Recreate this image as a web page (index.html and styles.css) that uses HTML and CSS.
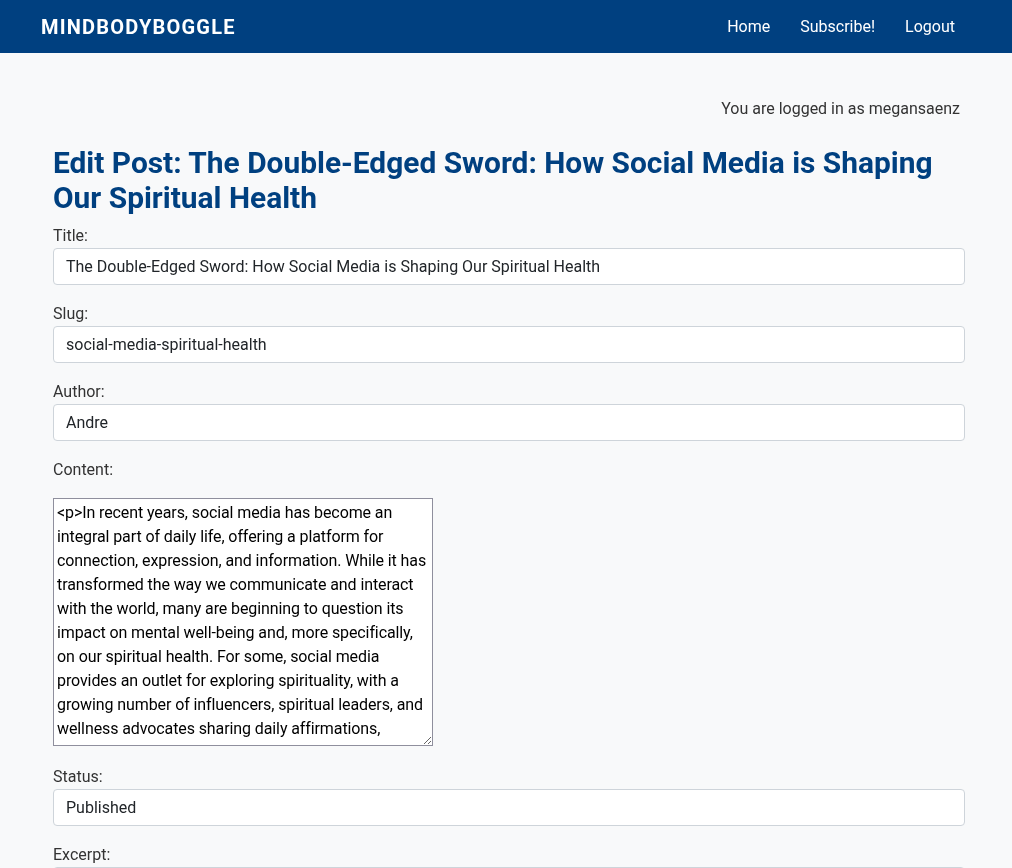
FILE: index.html
```html
<!DOCTYPE html>
<html lang="en">
<head>
<meta charset="utf-8">
<title>Edit Post - MindBodyBoggle</title>
<link rel="stylesheet" href="styles.css">
</head>
<body>
<nav class="navbar">
  <a class="brand" href="#">MINDBODYBOGGLE</a>
  <ul class="nav-links">
    <li><a href="#">Home</a></li>
    <li><a href="#">Subscribe!</a></li>
    <li><a href="#">Logout</a></li>
  </ul>
</nav>
<main class="container">
  <p class="user-line">You are logged in as megansaenz</p>
  <h1 class="page-title">Edit Post: The Double-Edged Sword: How Social Media is Shaping Our Spiritual Health</h1>
  <form class="post-form">
    <div class="form-group">
      <label class="field-label" for="title">Title:</label>
      <input class="field-input" id="title" type="text" value="The Double-Edged Sword: How Social Media is Shaping Our Spiritual Health">
    </div>
    <div class="form-group">
      <label class="field-label" for="slug">Slug:</label>
      <input class="field-input" id="slug" type="text" value="social-media-spiritual-health">
    </div>
    <div class="form-group">
      <label class="field-label" for="author">Author:</label>
      <input class="field-input" id="author" type="text" value="Andre">
    </div>
    <div class="form-group">
      <label class="field-label" for="content">Content:</label>
      <textarea class="field-textarea" id="content">&lt;p&gt;In recent years, social media has become an integral part of daily life, offering a platform for connection, expression, and information. While it has transformed the way we communicate and interact with the world, many are beginning to question its impact on mental well-being and, more specifically, on our spiritual health. For some, social media provides an outlet for exploring spirituality, with a growing number of influencers, spiritual leaders, and wellness advocates sharing daily affirmations, meditations, and teachings with millions of followers.&lt;/p&gt;</textarea>
    </div>
    <div class="form-group">
      <label class="field-label" for="status">Status:</label>
      <input class="field-input" id="status" type="text" value="Published">
    </div>
    <div class="form-group">
      <label class="field-label" for="excerpt">Excerpt:</label>
      <input class="field-input" id="excerpt" type="text" value="Exploring how social media shapes our spiritual well-being.">
    </div>
  </form>
</main>
</body>
</html>
```
FILE: styles.css
```css
* {
  box-sizing: border-box;
}

html, body {
  margin: 0;
  padding: 0;
}

body {
  background: #f8f9fa;
  font-family: Roboto, "Liberation Sans", Arial, sans-serif;
  font-size: 16px;
  color: #333333;
}

.navbar {
  display: flex;
  align-items: center;
  justify-content: space-between;
  height: 53px;
  padding: 0 42px 0 41px;
  background: #004080;
}

.brand {
  color: #ffffff;
  text-decoration: none;
  font-weight: 700;
  font-size: 20px;
  letter-spacing: 1.2px;
}

.nav-links {
  display: flex;
  list-style: none;
  margin: 0;
  padding: 0;
}

.nav-links a {
  display: block;
  padding: 0 15px;
  color: #ffffff;
  text-decoration: none;
  font-size: 16px;
  line-height: 54px;
}

.container {
  padding: 44px 47px 40px 53px;
}

.user-line {
  margin: 0 5px 24px 0;
  text-align: right;
  line-height: 24px;
  color: #333333;
}

.page-title {
  margin: 0 0 9px;
  font-size: 29.9px;
  line-height: 35px;
  font-weight: 700;
  color: #004080;
}

.form-group {
  margin-bottom: 17px;
}

.field-label {
  display: block;
  line-height: 24px;
  font-size: 16px;
  color: #333333;
}

.field-input {
  display: block;
  width: 100%;
  height: 37px;
  padding: 8px 12px;
  border: 1px solid #ced4da;
  border-radius: 4px;
  background: #ffffff;
  font-family: Roboto, "Liberation Sans", Arial, sans-serif;
  font-size: 16px;
  color: #212529;
}

.field-textarea {
  display: block;
  width: 380px;
  height: 248px;
  margin-top: 16px;
  margin-bottom: 19px;
  padding: 2px 3px;
  border: 1px solid #8f8f9d;
  border-radius: 0;
  background: #ffffff;
  font-family: Roboto, "Liberation Sans", Arial, sans-serif;
  font-size: 16px;
  line-height: 24px;
  letter-spacing: -0.1px;
  color: #000000;
  scrollbar-width: none;
}
```
